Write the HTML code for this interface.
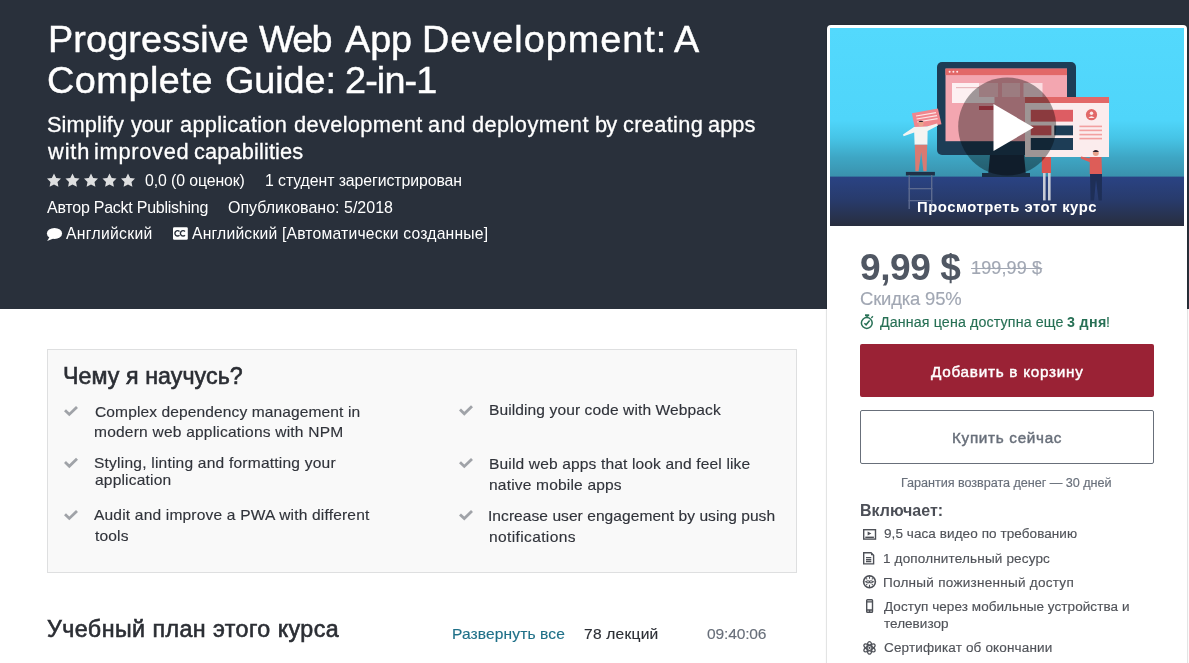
<!DOCTYPE html>
<html><head><meta charset="utf-8">
<style>
html,body{margin:0;padding:0;}
body{width:1189px;height:663px;overflow:hidden;position:relative;background:#fff;font-family:"Liberation Sans",sans-serif;}
.t{position:absolute;white-space:nowrap;-webkit-font-smoothing:antialiased;will-change:transform;}
.abs{position:absolute;}
#hdr{left:0;top:0;width:1189px;height:309px;background:#29303b;}
#box{left:47px;top:349px;width:748px;height:222px;background:#f9f9f9;border:1px solid #dedfe0;}
#card{left:827px;top:25px;width:360px;height:700px;background:#fff;border-radius:4px;box-shadow:0 0 1px 1px rgba(20,23,28,.12),0 3px 1px 0 rgba(20,23,28,.1);}
#video{left:830px;top:28px;width:354px;height:198px;}
#btn1{left:860px;top:344px;width:294px;height:53px;background:#9a2235;border-radius:2px;}
#btn2{left:860px;top:410px;width:292px;height:52px;border:1px solid #686f7a;border-radius:2px;background:#fff;}
</style></head><body>
<div id="hdr" class="abs"></div>
<div id="box" class="abs"></div>
<div id="card" class="abs"></div>
<svg id="video" class="abs" width="354" height="198" viewBox="0 0 354 198">
  <defs>
    <linearGradient id="sky" gradientUnits="userSpaceOnUse" x1="0" y1="0" x2="0" y2="149">
      <stop offset="0" stop-color="#53d9fd"/>
      <stop offset="0.62" stop-color="#4fd5fa"/>
      <stop offset="0.74" stop-color="#46c4e6"/>
      <stop offset="0.87" stop-color="#3ea6c4"/>
      <stop offset="1" stop-color="#3a91ac"/>
    </linearGradient>
    <linearGradient id="floor" gradientUnits="userSpaceOnUse" x1="0" y1="148.6" x2="0" y2="198">
      <stop offset="0" stop-color="#2a4384"/>
      <stop offset="0.47" stop-color="#283b6c"/>
      <stop offset="1" stop-color="#282e3e"/>
    </linearGradient>
  </defs>
  <rect x="0" y="0" width="354" height="149" fill="url(#sky)"/>
  <rect x="0" y="148.6" width="354" height="49.4" fill="url(#floor)"/>
  <!-- monitor -->
  <rect x="107" y="34" width="139" height="93" rx="5" fill="#1d3d56"/>
  <rect x="115.5" y="40.6" width="121.5" height="72.6" fill="#f3a6b0"/>
  <rect x="115.5" y="40.6" width="121.5" height="6.5" fill="#e26868"/>
  <circle cx="119.6" cy="43.8" r="1" fill="#fde8ea"/><circle cx="123.4" cy="43.8" r="1" fill="#fde8ea"/><circle cx="127.2" cy="43.8" r="1" fill="#fde8ea"/>
  <rect x="122" y="55" width="42.5" height="20" fill="#fdf0f2"/><rect x="126" y="59" width="28" height="1.2" fill="#e8b9be"/>
  <rect x="149" y="55" width="19" height="14" fill="#f7c5cb"/>
  <rect x="172" y="55" width="18" height="14" fill="#f7c5cb"/>
  <rect x="193.5" y="55" width="19" height="14" fill="#fbdde1"/>
  <rect x="149" y="78" width="16" height="4" fill="#d84a5a"/>
  <path d="M160 127 L194 127 L196 148 L158 148 Z" fill="#1a2f44"/>
  <rect x="152" y="145" width="48" height="4" fill="#1a2f44"/>
  <!-- front window -->
  <rect x="195" y="69" width="84" height="60" fill="#fbeced"/>
  <rect x="195" y="69" width="84" height="6" fill="#e26868"/>
  <rect x="200.8" y="81.8" width="42.2" height="11.8" fill="#dd5d63"/>
  <rect x="200.8" y="97.5" width="20.6" height="9.8" fill="#dd5d63"/>
  <rect x="224.3" y="97.5" width="18.7" height="9.8" fill="#1d3d56"/>
  <rect x="200.8" y="110" width="42.2" height="12" fill="#1d3d56"/>
  <circle cx="261.5" cy="86.7" r="5.6" fill="#e26868"/>
  <circle cx="261.5" cy="85.3" r="1.7" fill="#fbeced"/>
  <path d="M258.4 90 Q261.5 86.6 264.6 90 Z" fill="#fbeced"/>
  <rect x="249.4" y="97.6" width="22.6" height="1.6" fill="#f2a0a0"/>
  <rect x="249.4" y="101.6" width="22.6" height="1.6" fill="#f2a0a0"/>
  <rect x="249.4" y="105.8" width="22.6" height="1.6" fill="#f2a0a0"/>
  <rect x="249.4" y="109.8" width="22.6" height="1.6" fill="#f2a0a0"/>
  <!-- left person -->
  <path d="M81.9 85.3 L107.9 80.5 L111.5 96.2 L84.9 100.4 Z" fill="#f0868e"/>
  <path d="M86 88 L106 84.6 M86.6 91 L107 87.6 M87.2 94 L107.6 90.6" stroke="#fde4e6" stroke-width="1.2"/>
  <circle cx="91" cy="95.5" r="2.6" fill="#e9a48c"/>
  <path d="M88.3 94 Q91 91.6 93.6 94 Z" fill="#2a2230"/>
  <path d="M84 99 L97 98.6 L107 95.6 L108 97.6 L97.6 103 L97.4 116.7 L84.6 116.7 L84.2 104.6 L73.6 108.2 L73 106.6 Z" fill="#f4f4f2"/>
  <path d="M84.8 116.7 L97.2 116.7 L96.6 143.3 L93.4 143.3 L91.2 124 L88.6 143.3 L85.4 143.3 Z" fill="#d97a72"/>
  <rect x="75.9" y="143.9" width="29" height="3.6" fill="#1f3148"/>
  <rect x="78.5" y="147" width="1.4" height="34" fill="#5d6b90"/>
  <rect x="101" y="147" width="1.4" height="34" fill="#5d6b90"/>
  <rect x="78.5" y="160" width="24" height="1.3" fill="#5d6b90"/>
  <rect x="78.5" y="172" width="24" height="1.3" fill="#5d6b90"/>
  <!-- middle person -->
  <rect x="211.8" y="129" width="9.2" height="16" fill="#d9544f"/>
  <rect x="213" y="145" width="2.6" height="27.4" fill="#c9ccd6"/>
  <rect x="218" y="145" width="2.6" height="27.4" fill="#c9ccd6"/>
  <!-- right person -->
  <circle cx="265.8" cy="125" r="3" fill="#e9a48c"/>
  <path d="M262.6 124 Q265.8 120 269 124 Z" fill="#2a2230"/>
  <path d="M259.7 129 L271.5 129 L272 146 L259.7 146 Z" fill="#dd5d58"/>
  <path d="M260.5 130.5 L251 128.6 L250.6 130.6 L260.5 134.5 Z" fill="#dd5d58"/>
  <path d="M260 146 L272 146 L271.8 172.4 L268.6 172.4 L266 152 L264 172.4 L260.6 172.4 Z" fill="#1e2f57"/>
  <linearGradient id="ov" gradientUnits="userSpaceOnUse" x1="0" y1="148.6" x2="0" y2="198">
    <stop offset="0" stop-color="#000" stop-opacity="0"/>
    <stop offset="1" stop-color="#14171c" stop-opacity="0.35"/>
  </linearGradient>
  <g>
  </g>
  <!-- play -->
  <circle cx="177.2" cy="98.5" r="49" fill="#000" fill-opacity="0.37"/>
  <path d="M163.5 76 L203.7 99.5 L163.5 123 Z" fill="#fff"/>
</svg>
<div id="btn1" class="abs"></div>
<div id="btn2" class="abs"></div>

<!-- stars -->
<svg class="abs" style="left:0;top:0" width="1189" height="663" viewBox="0 0 1189 663">
  <defs>
    <path id="star" d="M7 0 L9.2 4.3 L14 4.9 L10.5 8.3 L11.4 13.2 L7 10.9 L2.6 13.2 L3.5 8.3 L0 4.9 L4.8 4.3 Z"/>
  </defs>
  <g fill="#dedfe0">
    <use href="#star" x="47" y="173.6"/>
    <use href="#star" x="65.5" y="173.6"/>
    <use href="#star" x="84" y="173.6"/>
    <use href="#star" x="102.5" y="173.6"/>
    <use href="#star" x="121" y="173.6"/>
  </g>
  <!-- bubble -->
  <g fill="#fff">
    <ellipse cx="54.5" cy="233.4" rx="7.6" ry="5.5"/>
    <path d="M49.5 237 L47.2 241 L53.5 238.5 Z"/>
  </g>
  <!-- cc -->
  <rect x="173" y="227.2" width="14.8" height="12.6" rx="1.2" fill="#fff"/>
  <path d="M179.5 231.4 A2.7 2.7 0 1 0 179.5 235.2 M185 231.4 A2.7 2.7 0 1 0 185 235.2" fill="none" stroke="#29303b" stroke-width="1.4"/>
  <!-- checks -->
  <g fill="none" stroke="#a0a3a8" stroke-width="2.8" stroke-linecap="butt" stroke-linejoin="miter">
    <path d="M65 410.2 L69.3 414.4 L77 406.9"/>
    <path d="M65 462 L69.3 466.2 L77 458.7"/>
    <path d="M65 514.2 L69.3 518.4 L77 510.9"/>
    <path d="M460 409.6 L464.3 413.8 L472 406.3"/>
    <path d="M460 462.2 L464.3 466.4 L472 458.9"/>
    <path d="M460 514.4 L464.3 518.6 L472 511.1"/>
  </g>
  <!-- timer -->
  <g fill="none" stroke="#277055" stroke-width="1.5">
    <circle cx="866.8" cy="323" r="5.4"/>
    <path d="M864.4 323.2 L866.1 324.8 L869.6 320.6"/>
  </g>
  <rect x="865" y="314.3" width="4.2" height="2" fill="#277055"/>
  <rect x="866.3" y="316" width="1.5" height="1.8" fill="#277055"/>
  <path d="M870.8 317.4 L872.4 315.8 L873.4 316.8 L871.8 318.4 Z" fill="#277055"/>
  <!-- include icons -->
  <g fill="none" stroke="#4d5057" stroke-width="1.4">
    <rect x="863.7" y="529.7" width="11.8" height="9.4"/>
    <path d="M865.3 537.3 L873.9 537.3"/>
    <path d="M863.7 552.7 L871 552.7 L873.6 555.3 L873.6 563.9 L863.7 563.9 Z"/>
    <path d="M866 557.6 L871.3 557.6 M866 559.6 L871.3 559.6 M866 561.5 L871.3 561.5"/>
    <circle cx="869.5" cy="581.8" r="5.9" stroke-width="1.6"/>
    <rect x="866.7" y="599.7" width="5.8" height="12.5" rx="0.8"/>
    <path d="M866.7 601.9 L872.5 601.9 M866.7 610 L872.5 610 M869.6 610 L869.6 612.2"/>
  </g>
  <path d="M867.6 531.6 L871.4 533.6 L867.6 535.6 Z" fill="#4d5057"/>
  <path d="M871 552.7 L871 555.3 L873.6 555.3 Z" fill="#4d5057"/>
  <g fill="none" stroke="#4d5057" stroke-width="1.1">
    <path d="M869.5 576.5 L869.5 578.8 M869.5 584.8 L869.5 587 M864.8 581.8 L866.3 581.8 M872.7 581.8 L874.2 581.8 M866.2 578.4 L867.2 579.4 M872.8 578.4 L871.8 579.4 M866.2 585.2 L867.2 584.2 M872.8 585.2 L871.8 584.2"/>
    <ellipse cx="868" cy="581.8" rx="1.5" ry="1.1"/>
    <ellipse cx="871" cy="581.8" rx="1.5" ry="1.1"/>
  </g>
  <g fill="none" stroke="#4d5057" stroke-width="1.3">
    <ellipse cx="869.5" cy="647.9" rx="6.3" ry="2.4" transform="rotate(90 869.5 647.9)"/>
    <ellipse cx="869.5" cy="647.9" rx="6.3" ry="2.4" transform="rotate(30 869.5 647.9)"/>
    <ellipse cx="869.5" cy="647.9" rx="6.3" ry="2.4" transform="rotate(150 869.5 647.9)"/>
  </g>
  <circle cx="869.5" cy="647.9" r="1.1" fill="#4d5057"/>
</svg>

<div class="t" style="left:47.85px;top:15.41px;font-size:37.79px;line-height:49px;letter-spacing:0.136px;font-weight:400;color:#fff;-webkit-text-stroke:0.45px #fff;">Progressive</div>
<div class="t" style="left:258.60px;top:15.41px;font-size:37.79px;line-height:49px;letter-spacing:-1.744px;font-weight:400;color:#fff;-webkit-text-stroke:0.45px #fff;">Web</div>
<div class="t" style="left:345.00px;top:15.41px;font-size:37.79px;line-height:49px;letter-spacing:-0.054px;font-weight:400;color:#fff;-webkit-text-stroke:0.45px #fff;">App</div>
<div class="t" style="left:422.05px;top:15.41px;font-size:37.79px;line-height:49px;letter-spacing:1.019px;font-weight:400;color:#fff;-webkit-text-stroke:0.45px #fff;">Development:</div>
<div class="t" style="left:674.40px;top:15.41px;font-size:37.79px;line-height:49px;letter-spacing:0.000px;font-weight:400;color:#fff;-webkit-text-stroke:0.45px #fff;">A</div>
<div class="t" style="left:47.23px;top:56.41px;font-size:37.79px;line-height:49px;letter-spacing:0.538px;font-weight:400;color:#fff;-webkit-text-stroke:0.45px #fff;">Complete</div>
<div class="t" style="left:225.03px;top:56.41px;font-size:37.79px;line-height:49px;letter-spacing:-0.071px;font-weight:400;color:#fff;-webkit-text-stroke:0.45px #fff;">Guide:</div>
<div class="t" style="left:345.23px;top:56.41px;font-size:37.79px;line-height:49px;letter-spacing:-0.863px;font-weight:400;color:#fff;-webkit-text-stroke:0.45px #fff;">2-in-1</div>
<div class="t" style="left:46.50px;top:111.45px;font-size:21.80px;line-height:28px;letter-spacing:0.084px;font-weight:400;color:#fff;-webkit-text-stroke:0.3px #fff;">Simplify</div>
<div class="t" style="left:131.20px;top:111.45px;font-size:21.80px;line-height:28px;letter-spacing:-0.217px;font-weight:400;color:#fff;-webkit-text-stroke:0.3px #fff;">your</div>
<div class="t" style="left:180.10px;top:111.45px;font-size:21.80px;line-height:28px;letter-spacing:0.259px;font-weight:400;color:#fff;-webkit-text-stroke:0.3px #fff;">application</div>
<div class="t" style="left:294.30px;top:111.45px;font-size:21.80px;line-height:28px;letter-spacing:0.342px;font-weight:400;color:#fff;-webkit-text-stroke:0.3px #fff;">development</div>
<div class="t" style="left:428.30px;top:111.45px;font-size:21.80px;line-height:28px;letter-spacing:0.525px;font-weight:400;color:#fff;-webkit-text-stroke:0.3px #fff;">and</div>
<div class="t" style="left:471.50px;top:111.45px;font-size:21.80px;line-height:28px;letter-spacing:0.416px;font-weight:400;color:#fff;-webkit-text-stroke:0.3px #fff;">deployment</div>
<div class="t" style="left:594.80px;top:111.45px;font-size:21.80px;line-height:28px;letter-spacing:-0.825px;font-weight:400;color:#fff;-webkit-text-stroke:0.3px #fff;">by</div>
<div class="t" style="left:623.30px;top:111.45px;font-size:21.80px;line-height:28px;letter-spacing:0.323px;font-weight:400;color:#fff;-webkit-text-stroke:0.3px #fff;">creating</div>
<div class="t" style="left:707.90px;top:111.45px;font-size:21.80px;line-height:28px;letter-spacing:0.042px;font-weight:400;color:#fff;-webkit-text-stroke:0.3px #fff;">apps</div>
<div class="t" style="left:47.70px;top:138.45px;font-size:21.80px;line-height:28px;letter-spacing:0.885px;font-weight:400;color:#fff;-webkit-text-stroke:0.3px #fff;">with</div>
<div class="t" style="left:94.00px;top:138.45px;font-size:21.80px;line-height:28px;letter-spacing:0.723px;font-weight:400;color:#fff;-webkit-text-stroke:0.3px #fff;">improved</div>
<div class="t" style="left:193.70px;top:138.45px;font-size:21.80px;line-height:28px;letter-spacing:0.122px;font-weight:400;color:#fff;-webkit-text-stroke:0.3px #fff;">capabilities</div>
<div class="t" style="left:144.60px;top:170.41px;font-size:15.84px;line-height:21px;letter-spacing:-0.094px;font-weight:400;color:#fff;-webkit-text-stroke:0.0px #fff;">0,0 (0 оценок)</div>
<div class="t" style="left:264.80px;top:170.41px;font-size:15.84px;line-height:21px;letter-spacing:-0.073px;font-weight:400;color:#fff;-webkit-text-stroke:0.0px #fff;">1 студент зарегистрирован</div>
<div class="t" style="left:47.40px;top:196.76px;font-size:15.99px;line-height:21px;letter-spacing:-0.238px;font-weight:400;color:#fff;-webkit-text-stroke:0.0px #fff;">Автор Packt Publishing</div>
<div class="t" style="left:228.10px;top:196.56px;font-size:15.99px;line-height:21px;letter-spacing:0.013px;font-weight:400;color:#fff;-webkit-text-stroke:0.0px #fff;">Опубликовано: 5/2018</div>
<div class="t" style="left:66.40px;top:223.56px;font-size:15.70px;line-height:20px;letter-spacing:0.311px;font-weight:400;color:#fff;-webkit-text-stroke:0.0px #fff;">Английский</div>
<div class="t" style="left:191.80px;top:223.56px;font-size:15.70px;line-height:20px;letter-spacing:0.198px;font-weight:400;color:#fff;-webkit-text-stroke:0.0px #fff;">Английский [Автоматически созданные]</div>
<div class="t" style="left:62.80px;top:360.94px;font-size:23.26px;line-height:30px;letter-spacing:0.050px;font-weight:400;color:#2b2e34;-webkit-text-stroke:0.6px #2b2e34;">Чему я научусь?</div>
<div class="t" style="left:94.50px;top:401.61px;font-size:15.55px;line-height:20px;letter-spacing:0.106px;font-weight:400;color:#30333a;-webkit-text-stroke:0.15px #30333a;">Complex dependency management in</div>
<div class="t" style="left:94.20px;top:422.41px;font-size:15.55px;line-height:20px;letter-spacing:0.206px;font-weight:400;color:#30333a;-webkit-text-stroke:0.15px #30333a;">modern web applications with NPM</div>
<div class="t" style="left:93.50px;top:452.61px;font-size:15.55px;line-height:20px;letter-spacing:0.212px;font-weight:400;color:#30333a;-webkit-text-stroke:0.15px #30333a;">Styling, linting and formatting your</div>
<div class="t" style="left:94.60px;top:469.81px;font-size:15.55px;line-height:20px;letter-spacing:0.179px;font-weight:400;color:#30333a;-webkit-text-stroke:0.15px #30333a;">application</div>
<div class="t" style="left:94.20px;top:505.41px;font-size:15.55px;line-height:20px;letter-spacing:0.177px;font-weight:400;color:#30333a;-webkit-text-stroke:0.15px #30333a;">Audit and improve a PWA with different</div>
<div class="t" style="left:95.00px;top:526.21px;font-size:15.55px;line-height:20px;letter-spacing:0.157px;font-weight:400;color:#30333a;-webkit-text-stroke:0.15px #30333a;">tools</div>
<div class="t" style="left:488.60px;top:400.41px;font-size:15.55px;line-height:20px;letter-spacing:0.099px;font-weight:400;color:#30333a;-webkit-text-stroke:0.15px #30333a;">Building your code with Webpack</div>
<div class="t" style="left:488.60px;top:453.61px;font-size:15.55px;line-height:20px;letter-spacing:0.144px;font-weight:400;color:#30333a;-webkit-text-stroke:0.15px #30333a;">Build web apps that look and feel like</div>
<div class="t" style="left:488.80px;top:474.61px;font-size:15.55px;line-height:20px;letter-spacing:0.176px;font-weight:400;color:#30333a;-webkit-text-stroke:0.15px #30333a;">native mobile apps</div>
<div class="t" style="left:488.40px;top:505.61px;font-size:15.55px;line-height:20px;letter-spacing:0.050px;font-weight:400;color:#30333a;-webkit-text-stroke:0.15px #30333a;">Increase user engagement by using push</div>
<div class="t" style="left:488.80px;top:526.61px;font-size:15.55px;line-height:20px;letter-spacing:0.363px;font-weight:400;color:#30333a;-webkit-text-stroke:0.15px #30333a;">notifications</div>
<div class="t" style="left:47.00px;top:613.94px;font-size:23.26px;line-height:30px;letter-spacing:0.440px;font-weight:400;color:#2b2e34;-webkit-text-stroke:0.6px #2b2e34;">Учебный план этого курса</div>
<div class="t" style="left:452.00px;top:624.01px;font-size:15.55px;line-height:20px;letter-spacing:0.121px;font-weight:400;color:#1f7088;-webkit-text-stroke:0.15px #1f7088;">Развернуть все</div>
<div class="t" style="left:584.10px;top:624.01px;font-size:15.55px;line-height:20px;letter-spacing:0.232px;font-weight:400;color:#2b2e34;-webkit-text-stroke:0.15px #2b2e34;">78 лекций</div>
<div class="t" style="left:706.80px;top:624.01px;font-size:15.55px;line-height:20px;letter-spacing:-0.156px;font-weight:400;color:#686f7a;-webkit-text-stroke:0.15px #686f7a;">09:40:06</div>
<div class="t" style="left:917.10px;top:198.36px;font-size:14.83px;line-height:19px;letter-spacing:0.521px;font-weight:700;color:#fff;">Просмотреть этот курс</div>
<div class="t" style="left:860.44px;top:243.16px;font-size:37.06px;line-height:48px;letter-spacing:-0.429px;font-weight:700;color:#505763;">9,99 $</div>
<div class="t" style="left:971.10px;top:257.25px;font-size:18.02px;line-height:23px;letter-spacing:0.139px;font-weight:400;color:#a1a7b3;text-decoration:line-through;-webkit-text-stroke:0.15px #a1a7b3;">199,99 $</div>
<div class="t" style="left:860.10px;top:287.20px;font-size:18.46px;line-height:24px;letter-spacing:-0.177px;font-weight:400;color:#a1a7b3;-webkit-text-stroke:0.15px #a1a7b3;">Скидка 95%</div>
<div class="t" style="left:879.70px;top:312.96px;font-size:14.24px;line-height:19px;letter-spacing:0.128px;font-weight:400;color:#277055;-webkit-text-stroke:0.15px #277055;">Данная цена доступна еще</div>
<div class="t" style="left:1067.30px;top:312.96px;font-size:14.24px;line-height:19px;letter-spacing:0.344px;font-weight:700;color:#277055;">3 дня</div>
<div class="t" style="left:1105.80px;top:312.96px;font-size:14.24px;line-height:19px;letter-spacing:0.000px;font-weight:400;color:#277055;-webkit-text-stroke:0.15px #277055;">!</div>
<div class="t" style="left:931.10px;top:361.51px;font-size:15.26px;line-height:20px;letter-spacing:0.745px;font-weight:400;color:#fff;-webkit-text-stroke:0.45px #fff;">Добавить в корзину</div>
<div class="t" style="left:951.80px;top:427.91px;font-size:15.26px;line-height:20px;letter-spacing:0.694px;font-weight:400;color:#686f7a;-webkit-text-stroke:0.45px #686f7a;">Купить сейчас</div>
<div class="t" style="left:901.40px;top:475.22px;font-size:12.65px;line-height:16px;letter-spacing:-0.051px;font-weight:400;color:#686f7a;-webkit-text-stroke:0.15px #686f7a;">Гарантия возврата денег — 30 дней</div>
<div class="t" style="left:860.20px;top:500.36px;font-size:15.99px;line-height:21px;letter-spacing:0.022px;font-weight:700;color:#4c4f57;">Включает:</div>
<div class="t" style="left:883.80px;top:525.32px;font-size:13.52px;line-height:18px;letter-spacing:0.073px;font-weight:400;color:#505359;-webkit-text-stroke:0.15px #505359;">9,5 часа видео по требованию</div>
<div class="t" style="left:883.40px;top:549.52px;font-size:13.52px;line-height:18px;letter-spacing:0.162px;font-weight:400;color:#505359;-webkit-text-stroke:0.15px #505359;">1 дополнительный ресурс</div>
<div class="t" style="left:883.40px;top:574.12px;font-size:13.52px;line-height:18px;letter-spacing:0.268px;font-weight:400;color:#505359;-webkit-text-stroke:0.15px #505359;">Полный пожизненный доступ</div>
<div class="t" style="left:884.40px;top:597.52px;font-size:13.52px;line-height:18px;letter-spacing:0.060px;font-weight:400;color:#505359;-webkit-text-stroke:0.15px #505359;">Доступ через мобильные устройства и</div>
<div class="t" style="left:884.20px;top:615.32px;font-size:13.52px;line-height:18px;letter-spacing:0.025px;font-weight:400;color:#505359;-webkit-text-stroke:0.15px #505359;">телевизор</div>
<div class="t" style="left:883.80px;top:638.92px;font-size:13.52px;line-height:18px;letter-spacing:0.149px;font-weight:400;color:#505359;-webkit-text-stroke:0.15px #505359;">Сертификат об окончании</div>
</body></html>
